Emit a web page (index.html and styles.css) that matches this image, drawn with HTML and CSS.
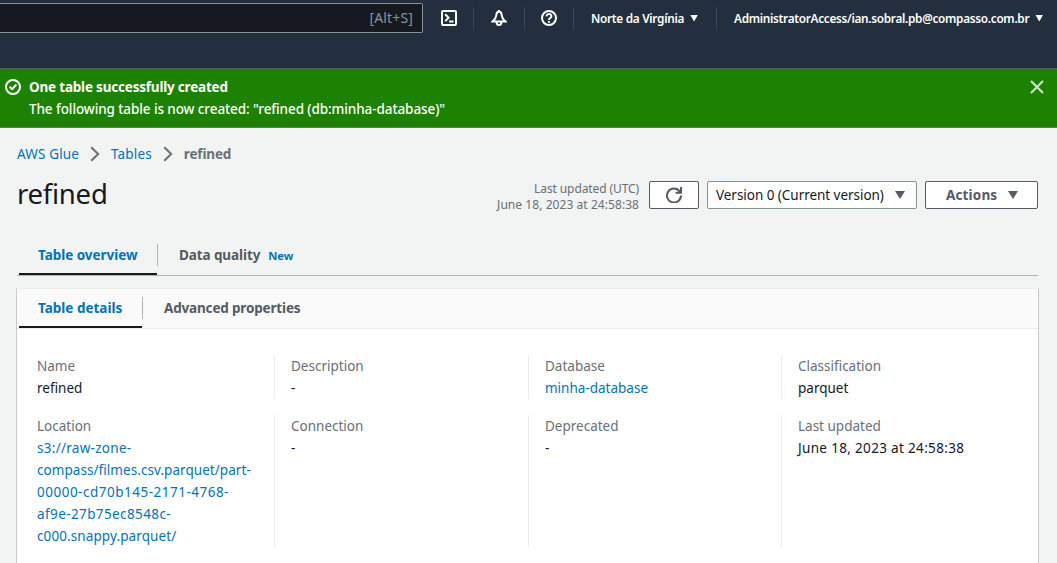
FILE: index.html
```html
<!DOCTYPE html>
<html lang="en">
<head>
<meta charset="utf-8">
<title>refined - AWS Glue</title>
<link rel="stylesheet" href="styles.css">
</head>
<body>
<header class="topbar">
  <div class="search"><span class="t-key">[Alt+S]</span></div>
  <div class="tool tool-shell"><svg width="16" height="16" viewBox="0 0 16 16"><rect x="1" y="1" width="14" height="14" rx="1"/><path d="M4.2 4.3 7.6 7.7 4.2 11.1M8.2 11.6h4.3"/></svg></div>
  <div class="tool tool-bell"><svg width="16" height="16" viewBox="0 0 16 16"><path d="M8 1.800C6.300 1.800 5.400 3.200 5.300 5.200 5.100 8 3.800 9.500 1.600 11.500H14.400C12.200 9.500 10.900 8 10.700 5.200 10.600 3.200 9.700 1.800 8 1.800Z"/><path d="M5.700 12v.7a2.300 2.300 0 0 0 4.600 0V12M8 0v2"/></svg></div>
  <div class="tool tool-help"><svg width="16" height="16" viewBox="0 0 16 16"><circle cx="8" cy="8" r="7"/><path d="M5.600 6.300A2.400 2.200 0 1 1 9.400 7.900C8.400 8.500 8 8.700 8 9.900M8 11v1.800"/></svg></div>
  <div class="menu menu-region"><span class="t-region">Norte da Virgínia</span><i class="caret caret-s"></i></div>
  <div class="menu menu-user"><span class="t-user">AdministratorAccess/ian.sobral.pb@compasso.com.br</span><i class="caret caret-s"></i></div>
</header>
<section class="flash">
  <svg class="flash-icon" width="16" height="16" viewBox="0 0 16 16"><circle cx="8" cy="8" r="7"/><path d="M4.600 7.800 7.200 10.200 11.300 5.700"/></svg>
  <div class="flash-text"><strong><span class="t-flash1">One table successfully created</span></strong><div><span class="t-flash2">The following table is now created: "refined (db:minha-database)"</span></div></div>
  <svg class="flash-close" width="14" height="14" viewBox="0 0 14 14"><path d="M1 1 13 13M13 1 1 13"/></svg>
</section>
<main class="content">
  <nav class="crumbs">
    <a class="t-glue">AWS Glue</a>
    <svg width="10" height="16" viewBox="0 0 10 16"><path d="M1.200 1.200 8.200 8 1.200 14.800"/></svg>
    <a class="t-tables">Tables</a>
    <svg width="10" height="16" viewBox="0 0 10 16"><path d="M1.200 1.200 8.200 8 1.200 14.800"/></svg>
    <b class="t-crumb">refined</b>
  </nav>
  <div class="heading">
    <h1>refined</h1>
    <div class="updated"><div><span class="t-up1">Last updated (UTC)</span></div><div><span class="t-up2">June 18, 2023 at 24:58:38</span></div></div>
    <div class="btn btn-refresh"><svg width="16" height="16" viewBox="0 0 16 16"><path d="M13.700 4.500A7 7 0 1 0 15 8.600M15 0v5.800H9.600M13 3v2.500"/></svg></div>
    <div class="btn btn-version"><span class="t-version">Version 0 (Current version)</span><i class="caret"></i></div>
    <div class="btn btn-actions"><span class="t-actions">Actions</span><i class="caret"></i></div>
  </div>
  <div class="tabs">
    <div class="tab active"><span class="t-overview">Table overview</span></div>
    <div class="tab"><span class="t-quality">Data quality</span><span class="new">New</span></div>
  </div>
  <section class="card">
    <div class="card-tabs">
      <div class="tab active"><span>Table details</span></div>
      <div class="tab"><span class="t-advanced">Advanced properties</span></div>
    </div>
    <div class="grid">
      <dl><dt>Name</dt><dd>refined</dd></dl>
      <dl><dt>Description</dt><dd>-</dd></dl>
      <dl><dt>Database</dt><dd><a>minha-database</a></dd></dl>
      <dl><dt>Classification</dt><dd>parquet</dd></dl>
      <dl><dt>Location</dt><dd><a><span class="s3-a">s3://raw-zone-</span><br><span class="s3-b">compass/filmes.csv.parquet/part-</span><br><span class="s3-c">00000-cd70b145-2171-4768-</span><br><span class="s3-d">af9e-27b75ec8548c-</span><br><span class="s3-e">c000.snappy.parquet/</span></a></dd></dl>
      <dl><dt>Connection</dt><dd>-</dd></dl>
      <dl><dt>Deprecated</dt><dd>-</dd></dl>
      <dl><dt>Last updated</dt><dd><span class="t-june">June 18, 2023 at 24:58:38</span></dd></dl>
    </div>
  </section>
</main>
</body>
</html>
```

FILE: styles.css
```css
* { box-sizing: border-box; }
body { margin: 0; width: 1057px; height: 563px; overflow: hidden; background: #f2f3f3; color: #16191f; font: 13.5px/22px "Noto Sans", "Open Sans", sans-serif; white-space: nowrap; }
svg { display: block; flex: none; fill: none; stroke: currentColor; stroke-width: 2; }
a { color: #0073bb; }
.caret { display: block; flex: none; width: 10px; height: 8px; background: #545b64; clip-path: polygon(0 0, 100% 0, 50% 100%); }
.caret-s { width: 8px; height: 7px; background: #fff; }

.topbar { height: 69px; padding-top: 2px; background: #232f3e; border-bottom: 1px solid #545b64; color: #fff; display: flex; align-items: flex-start; }
.search { flex: none; width: 423px; height: 30px; margin-top: 1px; background: #16191f; border: 1px solid #879596; border-left: 0; border-radius: 0 2px 2px 0; display: flex; align-items: center; justify-content: flex-end; padding: 0 9px 0 0; color: #879596; }
.t-key { font-size: 14px; letter-spacing: 0.15px; }
.tool { flex: none; height: 22px; margin-top: 5px; display: flex; align-items: center; justify-content: center; border-right: 1px solid #414750; }
.tool-shell { width: 51px; padding-left: 2px; }
.tool-bell { width: 51px; }
.tool-help { width: 49px; }
.menu { flex: none; height: 22px; margin-top: 5px; display: flex; align-items: center; font-size: 12px; font-weight: 600; }
.menu-region { width: 143px; padding-left: 17px; border-right: 1px solid #414750; gap: 6px; }
.menu-user { padding-left: 17px; gap: 6px; }
.t-region { font-size: 11.8px; letter-spacing: -0.3px; }
.t-user { font-size: 11.8px; letter-spacing: -0.3px; }

.flash { height: 59px; padding: 7px 13px 0 5px; display: flex; align-items: flex-start; background: #1d8102; color: #fff; border-bottom: 1px solid #687078; }
.flash-icon { margin: 3px 8px 0 0; }
.flash-text { flex: 1; font-weight: 500; }
.flash-text strong { display: block; font-weight: 700; }
.flash-close { margin-top: 4px; color: #d5e6d0; }
.t-flash1 { letter-spacing: -0.2px; }
.t-flash2 { letter-spacing: -0.09px; }

.content { padding: 16px 19px 0 17px; }
.crumbs { display: flex; align-items: center; height: 20px; color: #687078; }
.crumbs svg { margin: 0 11px; }
.t-glue { letter-spacing: 0.15px; }
.t-tables { letter-spacing: 0.15px; }
.t-crumb { letter-spacing: -0.15px; }
.heading { display: flex; align-items: center; height: 30px; margin-top: 16px; }
h1 { margin: 0 0 2px; flex: 1; font-size: 27.5px; line-height: 30px; font-weight: 400; letter-spacing: -0.25px; }
.updated { font-size: 12px; line-height: 16px; color: #687078; text-align: right; margin: 3px 10px 0 0; }
.t-up1 { letter-spacing: -0.1px; }
.t-up2 { letter-spacing: 0.06px; }
.btn { height: 28px; background: #fff; border: 1px solid #545b64; border-radius: 2px; display: flex; align-items: center; color: #545b64; }
.btn-refresh { width: 50px; justify-content: center; }
.btn-version { width: 210px; padding: 0 11px 0 8px; justify-content: space-between; border-color: #879596; color: #16191f; margin-left: 8px; }
.t-version { letter-spacing: -0.04px; }
.btn-actions { width: 113px; padding: 0 19px 0 20px; justify-content: space-between; margin-left: 8px; font-weight: 700; }
.t-actions { letter-spacing: 0.15px; }

.tabs { display: flex; height: 41px; margin-top: 25px; border-bottom: 1px solid #aab7b8; padding-left: 2px; font-weight: 700; color: #545b64; }
.tab { display: flex; align-items: center; position: relative; padding: 0 0 0 19px; }
.tab + .tab { padding-left: 22px; }
.tabs .active, .card-tabs .active { color: #0073bb; border-bottom: 2px solid #16191f; padding-top: 2px; }
.active::after { content: ""; position: absolute; right: -1px; top: 9px; width: 1px; height: 22px; background: #aab7b8; }
.tabs .active { width: 138px; }
.t-overview { letter-spacing: -0.04px; }
.t-quality { letter-spacing: -0.1px; }
.new { color: #0073bb; font-size: 11.2px; margin-left: 8px; padding-top: 1px; letter-spacing: -0.05px; }

.card { height: 300px; margin: 12px -1px 0 -1px; background: #fff; border: 1px solid #eaeded; border-left-color: #c6cccd; border-right-color: #c6cccd; }
.card-tabs { height: 40px; background: #fafafa; border-bottom: 1px solid #eaeded; display: flex; padding-left: 2px; font-weight: 700; color: #545b64; }
.card-tabs .active { width: 123px; padding-top: 1px; }
.card-tabs .active::after { top: 8px; }
.card-tabs .tab + .tab { padding-bottom: 1px; }
.t-advanced { letter-spacing: -0.17px; }
.grid { display: grid; grid-template-columns: 257px 254px 253px 1fr; grid-template-rows: 44px 132px; row-gap: 16px; padding-top: 26px; }
dl { margin: 0; padding-left: 16px; border-left: 1px solid #eaeded; }
dl:nth-child(4n+1) { border-left: 0; padding-left: 20px; }
dt { color: #687078; }
dd { margin: 0; }
.t-june { letter-spacing: 0.33px; }
.s3-a { letter-spacing: 0.28px; }
.s3-b { letter-spacing: 0.06px; }
.s3-c { letter-spacing: 0.5px; }
.s3-d { letter-spacing: 0.4px; }
.s3-e { letter-spacing: 0.1px; }
```
